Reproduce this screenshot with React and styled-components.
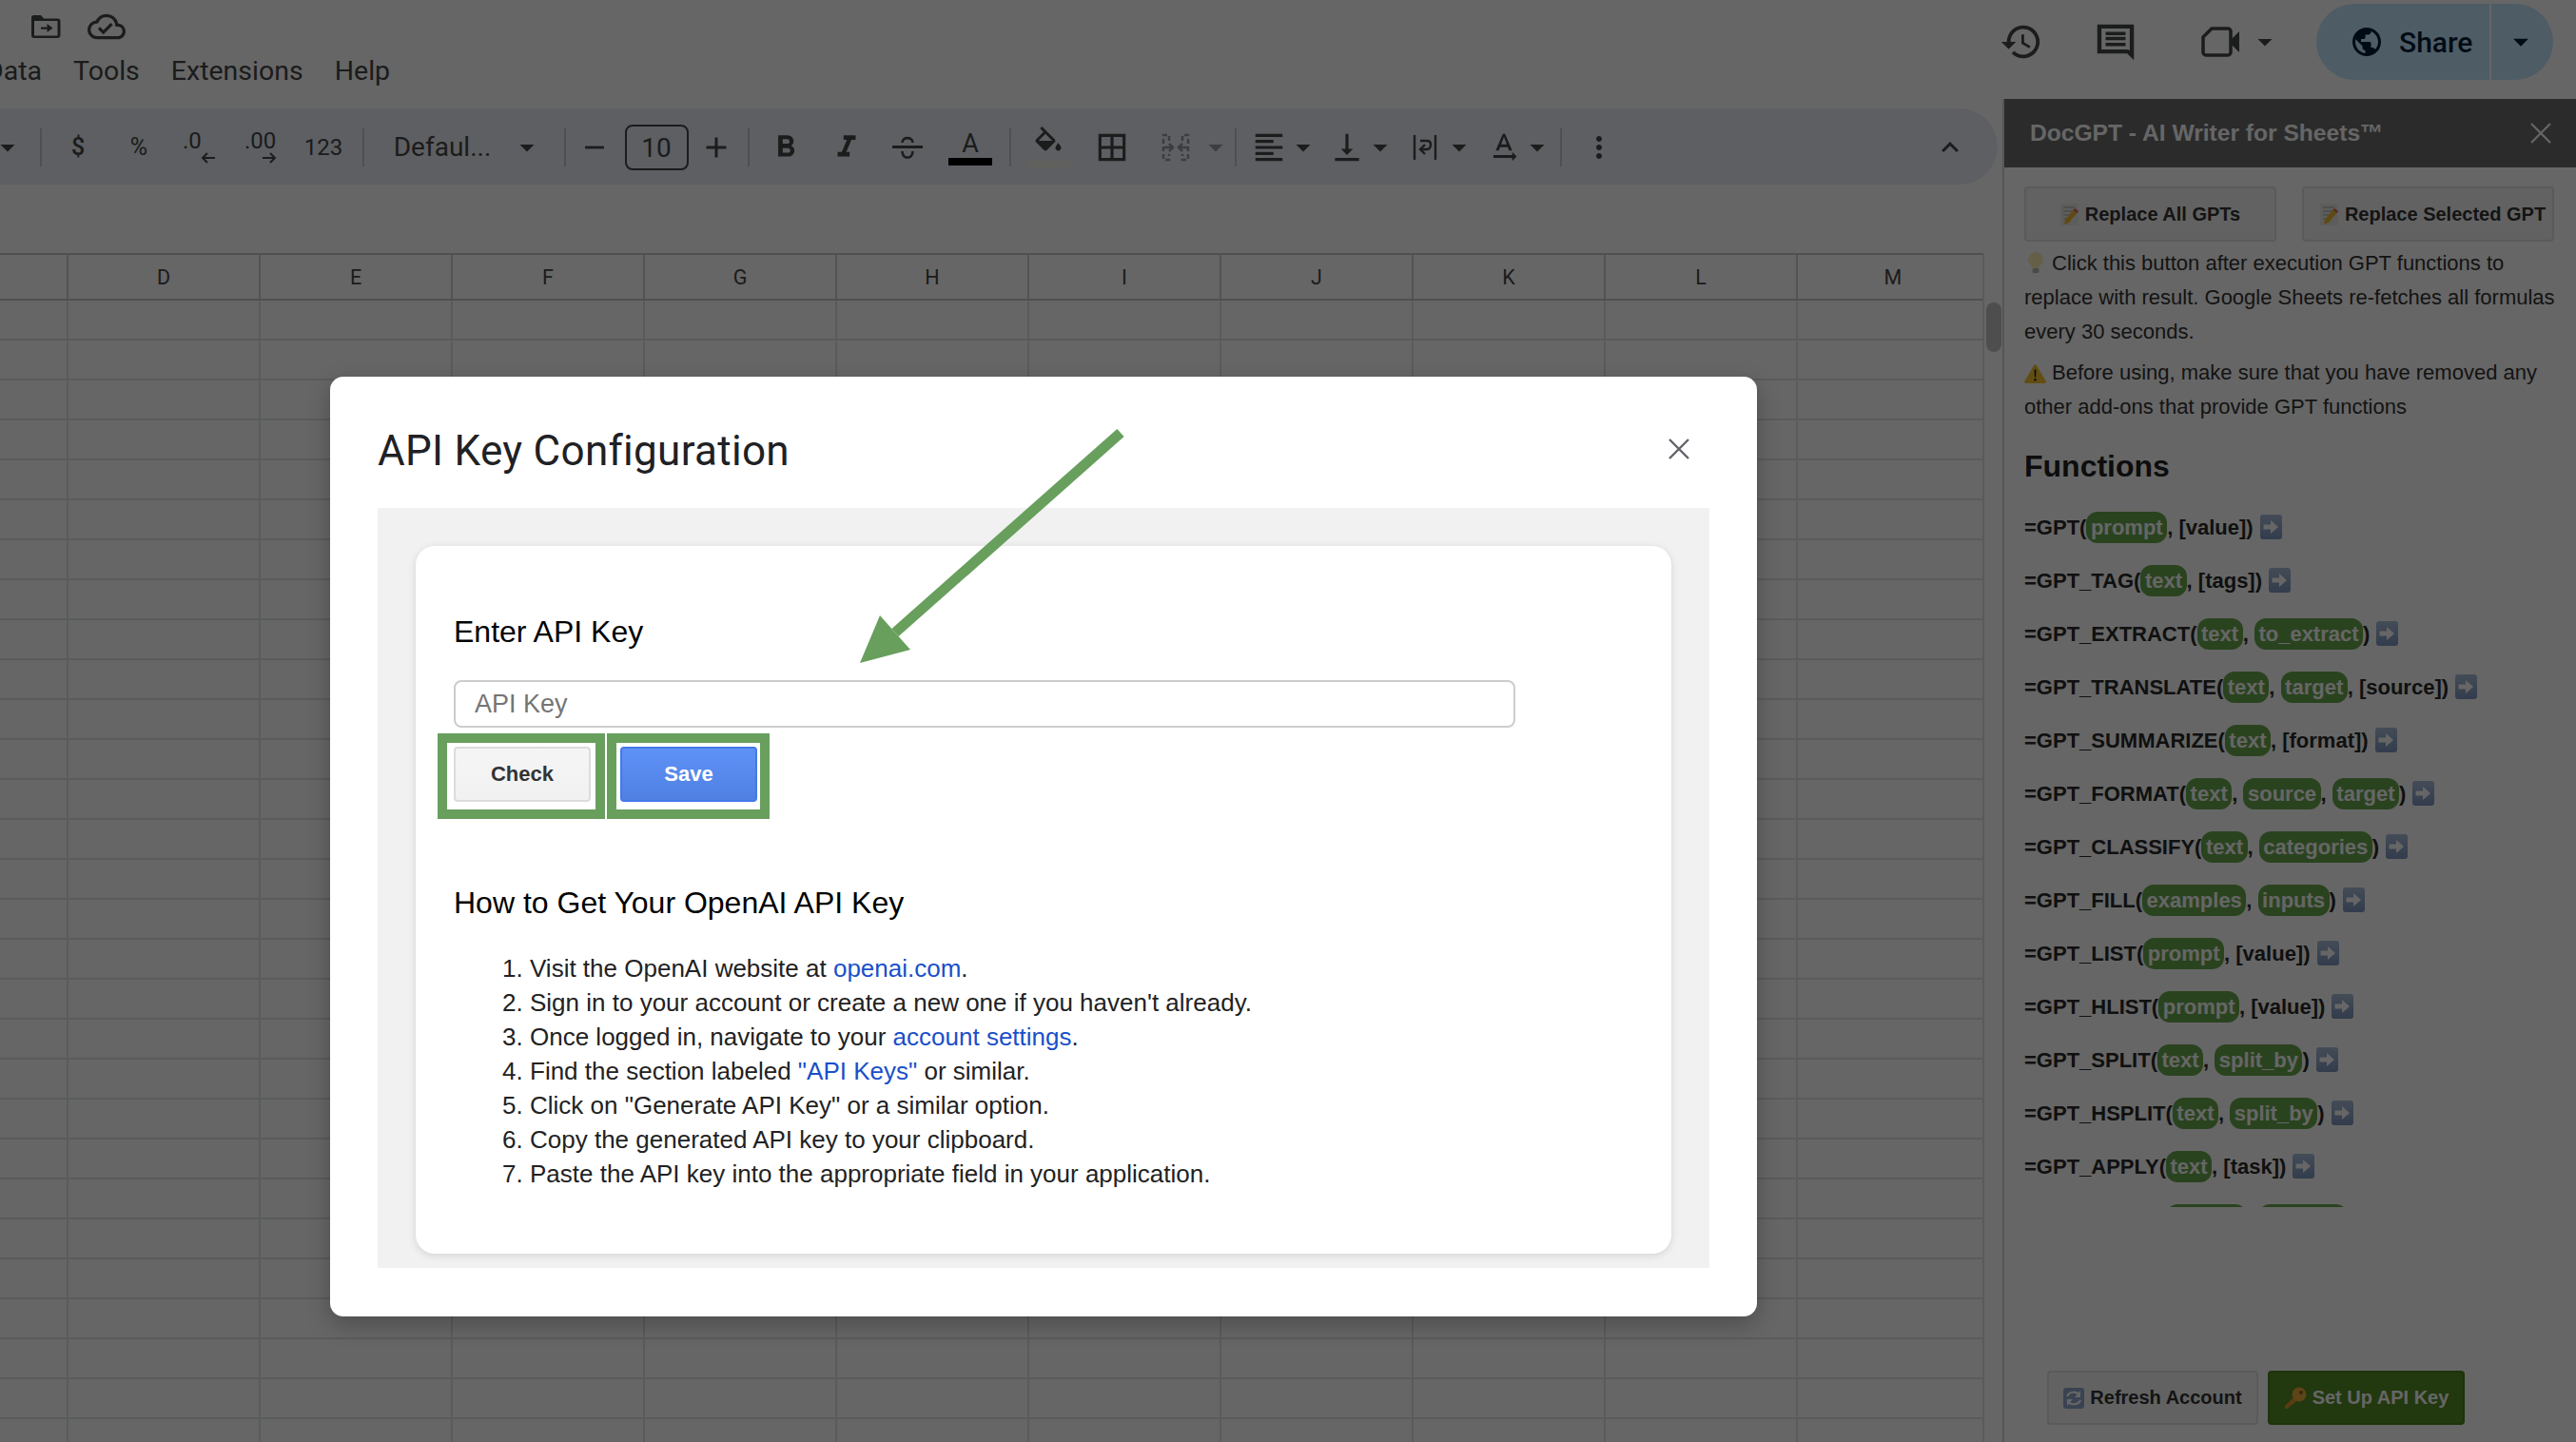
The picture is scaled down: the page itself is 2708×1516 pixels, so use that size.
import React from 'react';
import styled, { createGlobalStyle } from 'styled-components';
import {
  MdFormatBold,
  MdFormatItalic,
  MdBorderAll,
  MdFormatAlignLeft,
  MdVerticalAlignBottom,
  MdTextRotationNone,
  MdMoreVert,
  MdKeyboardArrowUp,
  MdArrowDropDown,
  MdHistory,
  MdPublic,
  MdRemove,
  MdAdd,
  MdOutlineCloudDone,
} from 'react-icons/md';

const GlobalStyle = createGlobalStyle`
  html, body { margin: 0; padding: 0; background: #fff; }
  * { box-sizing: border-box; }
`;

const SHEETS_FONT = 'Roboto, "Liberation Sans", sans-serif';
const ARIAL = '"Liberation Sans", Arial, sans-serif';
const ICON = '#444746';
const GREEN = '#689f5d';

/* ---------- small drawings ---------- */

const FolderMove = () => (
  <svg width="32" height="24" viewBox="0 0 32 24">
    <path d="M1 2.500C1 1.100 2 0 3.500 0H11l3 3.500h15c1.300 0 2.500 1 2.500 2.500V21c0 1.600-1.200 3-2.700 3H3.500C2 24 1 22.800 1 21.500z" fill="#444746" />
    <rect x="4" y="6" width="24.500" height="15.500" fill="#fff" />
    <path d="M11 12.500h6.500V9l6 4.500-6 4.500v-3.300H11z" fill="#444746" />
  </svg>
);

const VideoCam = () => (
  <svg width="42" height="34" viewBox="0 0 42 34">
    <path d="M11 3h17c1.600 0 3 1.300 3 3v22c0 1.600-1.400 3-3 3H5c-1.600 0-3-1.400-3-3V12z" fill="none" stroke="#444746" strokeWidth="3.500" strokeLinejoin="round" />
    <path d="M32 14l8-8v22l-8-8z" fill="#444746" />
  </svg>
);

const CommentIcon = () => (
  <svg width="42" height="42" viewBox="0 0 24 24" fill="#444746">
    <path d="M23 1.500H1V19h18l4 4zM20.500 4v13.200L19.300 16.500H3.500V4zM6 12.500h12v2H6zm0-3.500h12v2H6zm0-3h12v2H6z" />
  </svg>
);

const CloseX = ({ size, color, weight }) => (
  <svg width={size} height={size} viewBox="0 0 22 22" stroke={color} strokeWidth={weight} fill="none">
    <path d="M1 1l20 20M21 1L1 21" />
  </svg>
);

const FillBucket = () => (
  <svg width="36" height="36" viewBox="0 0 24 24" fill="#444746">
    <path d="M16.560 8.940L7.620 0 6.210 1.410l2.380 2.380-5.150 5.150c-.59.59-.59 1.540 0 2.120l5.500 5.500c.29.29.68.44 1.060.44s.77-.15 1.060-.44l5.500-5.500c.59-.58.59-1.530 0-2.120zM5.210 10L10 5.210 14.790 10H5.210zM19 11.500s-2 2.170-2 3.500c0 1.100.9 2 2 2s2-.9 2-2c0-1.330-2-3.500-2-3.500z" />
  </svg>
);

const StrikeIcon = () => (
  <svg width="32" height="26" viewBox="0 0 32 26" fill="none" stroke="#444746" strokeWidth="2.600">
    <path d="M10.500 8c0-6.500 11-6.500 11 0" />
    <path d="M0 12.500h32" strokeWidth="3" />
    <path d="M10.500 17c0 9 11 9 11 0" />
  </svg>
);

const MergeIcon = () => (
  <svg width="30" height="30" viewBox="0 0 30 30" fill="none" stroke="#444746" strokeWidth="2.500" opacity="0.5">
    <path d="M8 8V2H2v26h6v-6M22 8V2h6v26h-6v-6" strokeDasharray="5 3" />
    <path d="M3 15h9M8 11l4 4-4 4M27 15h-9M22 11l-4 4 4 4" />
  </svg>
);

const WrapIcon = () => (
  <svg width="26" height="28" viewBox="0 0 26 28" fill="none" stroke="#444746" strokeWidth="2.400">
    <path d="M2 1v26M24 1v26" />
    <path d="M8 7h7c3 0 4 2 4 4s-1 5-4 5H9" />
    <path d="M13 11l-5 5 5 5" />
  </svg>
);

const DecimalArrow = ({ $left }) => (
  <svg width="15" height="12" viewBox="0 0 15 12" fill="none" stroke="#444746" strokeWidth="2">
    {$left ? <path d="M15 6H2M7 1L2 6l5 5" /> : <path d="M0 6h13M8 1l5 5-5 5" />}
  </svg>
);

const MemoPencil = () => (
  <svg width="20" height="23" viewBox="0 0 20 23">
    <rect x="0" y="0" width="19" height="23" fill="#e8e8e4" />
    <path d="M3 4h12M3 8h10M3 12h8M3 16h6" stroke="#a8a8a8" strokeWidth="1.200" />
    <path d="M15 5l4 3-10 12-5 2 1-5z" fill="#f3b92f" />
    <path d="M15 5l4 3-1.500 2-4-3z" fill="#e0696b" />
  </svg>
);

const Bulb = () => (
  <svg width="16" height="23" viewBox="0 0 16 23">
    <path d="M8 0a8 8 0 0 1 5 14c-1 1-1.500 2-1.500 3h-7c0-1-.5-2-1.500-3A8 8 0 0 1 8 0z" fill="#fbeeb0" />
    <rect x="4.500" y="17" width="7" height="5" rx="1.500" fill="#b9b9b9" />
  </svg>
);

const Warning = () => (
  <svg width="23" height="20" viewBox="0 0 23 20">
    <path d="M10 1.200c.7-1.200 2.300-1.200 3 0l9.600 16.300c.7 1.200-.1 2.500-1.500 2.500H1.900C.5 20-.3 18.700.4 17.500z" fill="#f4c430" />
    <path d="M10.500 5.500h2l-.3 8h-1.400zM10.400 15h2.200v2.400h-2.200z" fill="#222" />
  </svg>
);

const ArrowTile = () => (
  <svg width="23" height="26" viewBox="0 0 23 26">
    <defs>
      <linearGradient id="tile" x1="0" y1="0" x2="0" y2="1">
        <stop offset="0" stopColor="#a9bed9" />
        <stop offset="1" stopColor="#7d97bf" />
      </linearGradient>
    </defs>
    <rect x="0" y="0" width="23" height="26" rx="3" fill="url(#tile)" />
    <path d="M3.500 10.500H11V6l8 7-8 7v-4.500H3.500z" fill="#fff" />
  </svg>
);

const RefreshTile = () => (
  <svg width="22" height="22" viewBox="0 0 22 22">
    <rect width="22" height="22" rx="3" fill="#8fa9cd" />
    <path d="M4 9c2-5 10-6 13-1" stroke="#fff" strokeWidth="2.200" fill="none" />
    <path d="M18 13c-2 5-10 6-13 1" stroke="#fff" strokeWidth="2.200" fill="none" />
    <path d="M18 3v7h-6zM4 19v-7h6z" fill="#fff" />
  </svg>
);

const KeyEmoji = () => (
  <svg width="24" height="24" viewBox="0 0 24 24">
    <path d="M12 9L1 20v3h4v-2h2v-2h2l5-5z" fill="#d99a2b" />
    <circle cx="16" cy="8" r="7.500" fill="#eaaa3a" />
    <circle cx="18" cy="6" r="2" fill="#8a5f14" />
  </svg>
);

/* ---------- page ---------- */

const Page = styled.div`
  position: relative;
  width: 2708px;
  height: 1516px;
  overflow: hidden;
  background: #fff;
`;

const TopBar = styled.div`
  display: flex;
  justify-content: space-between;
  height: 104px;
  font-family: ${SHEETS_FONT};
`;

const TopLeft = styled.div`
  display: flex;
  flex-direction: column;
`;

const DocIcons = styled.div`
  display: flex;
  align-items: center;
  gap: 28px;
  height: 24px;
  margin: 16px 0 0 32px;
`;

const Menu = styled.div`
  display: flex;
  margin: 15px 0 0 -15px;
`;

const MenuItem = styled.span`
  font-size: 28.500px;
  line-height: 40px;
  color: #444746;
  margin-right: 33px;
`;

const TopRight = styled.div`
  display: flex;
  align-items: center;
  height: 88px;
  padding-right: 24px;
`;

const TopIcon = styled.div`
  display: flex;
  align-items: center;
  margin-left: ${(p) => p.$ml}px;
`;

const ShareGroup = styled.div`
  display: flex;
  height: 80px;
  margin-left: 36px;
  color: #001d35;
`;

const ShareMain = styled.div`
  display: flex;
  align-items: center;
  width: 182px;
  padding-left: 35px;
  gap: 16px;
  background: #c2e7ff;
  border-radius: 40px 0 0 40px;
  font-size: 30px;
  font-weight: 500;
`;

const ShareCaret = styled.div`
  display: flex;
  align-items: center;
  justify-content: center;
  width: 65px;
  margin-left: 2px;
  padding-right: 4px;
  background: #c2e7ff;
  border-radius: 0 40px 40px 0;
`;

const Body = styled.div`
  display: flex;
  height: 1412px;
`;

const Main = styled.div`
  width: 2105px;
  flex: none;
  overflow: hidden;
`;

const Toolbar = styled.div`
  display: flex;
  align-items: center;
  width: 2100px;
  height: 80px;
  margin-top: 10px;
  margin-bottom: 72px;
  padding-top: 2px;
  background: #e9eef6;
  border-radius: 0 40px 40px 0;
  font-family: ${SHEETS_FONT};
  color: ${ICON};
`;

const Slot = styled.div`
  display: flex;
  flex: none;
  align-items: center;
  justify-content: center;
  flex-direction: column;
  width: ${(p) => p.$w}px;
  margin-left: ${(p) => p.$ml}px;
  color: ${(p) => (p.$off ? '#9a9c9c' : ICON)};
`;

const Separator = styled.div`
  width: 2px;
  height: 40px;
  background: #c4c7c5;
`;

const ToolText = styled.span`
  font-size: ${(p) => p.$size || 24}px;
  font-weight: ${(p) => p.$weight || 400};
  line-height: 30px;
  white-space: nowrap;
`;

const DecimalText = styled(ToolText)`
  line-height: 20px;
  font-size: 24px;
  align-self: flex-start;
`;

const DecimalRow = styled.div`
  display: flex;
  justify-content: flex-end;
  width: 100%;
  height: 12px;
  margin-top: 2px;
`;

const FontSizeBox = styled.div`
  display: flex;
  align-items: center;
  justify-content: center;
  width: 67px;
  height: 48px;
  border: 2px solid #444746;
  border-radius: 8px;
  font-size: 28px;
`;

const ColorBar = styled.div`
  width: ${(p) => p.$w}px;
  height: 8px;
  background: ${(p) => p.$color};
`;

const GridWrap = styled.div`
  display: flex;
  height: 1250px;
`;

const Grid = styled.div`
  width: 2084px;
  flex: none;
  overflow: hidden;
  font-family: ${SHEETS_FONT};
  color: #444746;
`;

const HeaderRow = styled.div`
  display: flex;
  height: 50px;
  border-top: 2px solid #c7c7c7;
  border-bottom: 2px solid #c7c7c7;
`;

const HeaderCell = styled.div`
  display: flex;
  flex: none;
  align-items: center;
  justify-content: center;
  width: ${(p) => p.$w}px;
  height: 100%;
  border-right: 2px solid #d0d0d0;
  font-size: 21.500px;
`;

const GridRow = styled.div`
  display: flex;
  height: 42px;
  border-bottom: 2px solid #e2e3e3;
`;

const GridCell = styled.div`
  flex: none;
  width: ${(p) => p.$w}px;
  height: 100%;
  border-right: 2px solid #e2e3e3;
`;

const ScrollTrack = styled.div`
  flex: 1;
  padding: 52px 1px 0 2px;
  border-left: 2px solid #e2e3e3;
`;

const ScrollThumb = styled.div`
  height: 52px;
  border-radius: 9px;
  background: #c4c4c4;
`;

/* ---------- side panel ---------- */

const Panel = styled.aside`
  flex: 1;
  border-left: 2px solid #d8d8d8;
  font-family: ${ARIAL};
  color: #333;
`;

const PanelHeader = styled.div`
  display: flex;
  align-items: center;
  justify-content: space-between;
  height: 72px;
  padding: 0 26px 0 27px;
  background: #6b6b6b;
  color: #fff;
  font-size: 24.600px;
  font-weight: 700;
`;

const PanelBody = styled.div`
  padding: 20px 22px 0 21px;
`;

const ButtonPair = styled.div`
  display: flex;
  gap: 27px;
`;

const SideButton = styled.button`
  display: flex;
  align-items: center;
  justify-content: center;
  gap: 6px;
  width: ${(p) => p.$w || 265}px;
  height: ${(p) => p.$h || 58}px;
  padding: 0 0 0 ${(p) => p.$pl || 0}px;
  background: ${(p) => (p.$action ? '#568c26' : '#f6f6f6')};
  border: 2px solid ${(p) => (p.$action ? '#4d8120' : '#e0e0e0')};
  border-radius: 4px;
  font-family: ${ARIAL};
  font-size: 20px;
  font-weight: 700;
  color: ${(p) => (p.$action ? '#fff' : '#333')};
  white-space: nowrap;
`;

const Note = styled.p`
  margin: ${(p) => p.$mt}px 0 0;
  font-size: 22px;
  line-height: 36px;
`;

const NoteIcon = styled.span`
  display: inline-block;
  vertical-align: -4px;
  margin: 0 ${(p) => p.$mr}px 0 ${(p) => p.$ml}px;
  line-height: 0;
`;

const FunctionsTitle = styled.h2`
  margin: 26px 0 0;
  font-size: 32px;
  line-height: 36px;
  font-weight: 700;
  color: #222;
`;

const FunctionList = styled.div`
  height: 731px;
  margin-top: 30px;
  overflow: hidden;
`;

const FunctionRow = styled.div`
  height: 33px;
  margin-bottom: 23px;
  font-size: 22px;
  line-height: 33px;
  font-weight: 700;
  color: #2a2a2a;
  white-space: pre;
`;

const Pill = styled.span`
  display: inline-block;
  padding: 0 4.500px;
  border-radius: 12px;
  background: #6aa84f;
  color: #fff;
`;

const RowArrow = styled.span`
  display: inline-block;
  margin-left: 7px;
  line-height: 0;
  vertical-align: -5px;
`;

const FooterButtons = styled.div`
  display: flex;
  gap: 10px;
  margin: 172px 0 0 24px;
`;

/* ---------- dialog ---------- */

const Dim = styled.div`
  position: absolute;
  inset: 0;
  padding: 396px 0 0 347px;
  background: rgba(0, 0, 0, 0.6);
`;

const Dialog = styled.div`
  position: relative;
  width: 1500px;
  height: 988px;
  padding: 0 50px;
  background: #fff;
  border-radius: 14px;
  box-shadow: 0 8px 24px rgba(0, 0, 0, 0.25);
`;

const DialogHead = styled.div`
  display: flex;
  align-items: center;
  justify-content: space-between;
  height: 138px;
  padding: 17px 21px 0 0;
`;

const DialogTitle = styled.h1`
  margin: 0;
  font-family: ${SHEETS_FONT};
  font-size: 44px;
  font-weight: 400;
  letter-spacing: 0.3px;
  color: #202124;
`;

const DialogClose = styled.div`
  display: flex;
  margin-bottom: 3px;
`;

const GreyArea = styled.div`
  height: 799px;
  padding: 40px 40px 15px 40px;
  background: #f1f1f1;
`;

const Card = styled.div`
  height: 744px;
  padding: 72px 40px 0;
  background: #fff;
  border-radius: 20px;
  box-shadow: 0 2px 8px rgba(0, 0, 0, 0.12);
  font-family: ${ARIAL};
`;

const CardTitle = styled.h3`
  margin: ${(p) => p.$mt || 0}px 0 0;
  font-size: 32px;
  line-height: 36px;
  font-weight: 400;
  color: #000;
`;

const KeyInput = styled.input`
  display: block;
  width: 1116px;
  height: 50px;
  margin-top: 33px;
  padding: 0 20px;
  border: 2px solid #ccc;
  border-radius: 8px;
  font-family: ${ARIAL};
  font-size: 27px;
  &::placeholder {
    color: #757575;
  }
`;

const ActionRow = styled.div`
  display: flex;
  gap: 31px;
  margin-top: 20px;
`;

const Marked = styled.div`
  position: relative;
`;

const Frame = styled.div`
  position: absolute;
  top: -14px;
  bottom: -18px;
  left: -${(p) => p.$l}px;
  right: -${(p) => p.$r}px;
  border: 10px solid ${GREEN};
`;

const ActionButton = styled.button`
  display: block;
  width: 144px;
  height: 58px;
  border-radius: 4px;
  border: 2px solid ${(p) => (p.$primary ? '#4479ea' : '#dcdcdc')};
  background: ${(p) => (p.$primary ? 'linear-gradient(#5f92f7, #4f80e2)' : 'linear-gradient(#f5f5f5, #f1f1f1)')};
  color: ${(p) => (p.$primary ? '#fff' : '#333')};
  font-family: ${ARIAL};
  font-size: 22px;
  font-weight: 700;
`;

const Steps = styled.ol`
  margin: 33px 0 0;
  padding: 0 0 0 80px;
  font-size: 26px;
  line-height: 36px;
  color: #222;
`;

const StepLink = styled.a`
  color: #1a4fc9;
  text-decoration: none;
`;

const Annotation = styled.svg`
  position: absolute;
  left: 540px;
  top: 40px;
`;

/* ---------- data ---------- */

const P = ({ children }) => <Pill>{children}</Pill>;

const functions = [
  <>=GPT(<P>prompt</P>, [value])</>,
  <>=GPT_TAG(<P>text</P>, [tags])</>,
  <>=GPT_EXTRACT(<P>text</P>, <P>to_extract</P>)</>,
  <>=GPT_TRANSLATE(<P>text</P>, <P>target</P>, [source])</>,
  <>=GPT_SUMMARIZE(<P>text</P>, [format])</>,
  <>=GPT_FORMAT(<P>text</P>, <P>source</P>, <P>target</P>)</>,
  <>=GPT_CLASSIFY(<P>text</P>, <P>categories</P>)</>,
  <>=GPT_FILL(<P>examples</P>, <P>inputs</P>)</>,
  <>=GPT_LIST(<P>prompt</P>, [value])</>,
  <>=GPT_HLIST(<P>prompt</P>, [value])</>,
  <>=GPT_SPLIT(<P>text</P>, <P>split_by</P>)</>,
  <>=GPT_HSPLIT(<P>text</P>, <P>split_by</P>)</>,
  <>=GPT_APPLY(<P>text</P>, [task])</>,
  <>=GPT_TABLE(<P>prompt</P>, <P>headers</P>)</>,
];

const columns = ['', 'D', 'E', 'F', 'G', 'H', 'I', 'J', 'K', 'L', 'M'];
const columnWidth = (i) => (i === 0 ? 72 : 202);
const rows = Array.from({ length: 30 }, (_, i) => i);

const Caret = () => <MdArrowDropDown size={36} />;
const Sep = () => <Separator />;

// center x and width of everything on the toolbar, left to right
const tools = [
  [8, 16, <Caret />],
  [43, 2, <Sep />],
  [82, 30, <ToolText $size={25} $weight={500}>$</ToolText>],
  [146, 30, <ToolText $size={25}>%</ToolText>],
  [209, 34, <><DecimalText>.0</DecimalText><DecimalRow><DecimalArrow $left /></DecimalRow></>],
  [274, 34, <><DecimalText>.00</DecimalText><DecimalRow><DecimalArrow /></DecimalRow></>],
  [340, 40, <ToolText $size={24}>123</ToolText>],
  [382, 2, <Sep />],
  [465, 106, <ToolText $size={28}>Defaul...</ToolText>],
  [554, 24, <Caret />],
  [594, 2, <Sep />],
  [625, 36, <MdRemove size={34} />],
  [690, 67, <FontSizeBox>10</FontSizeBox>],
  [753, 36, <MdAdd size={36} />],
  [787, 2, <Sep />],
  [826, 36, <MdFormatBold size={38} />],
  [890, 36, <MdFormatItalic size={38} />],
  [954, 36, <StrikeIcon />],
  [1020, 46, <><ToolText $size={27}>A</ToolText><ColorBar $w={46} $color="#000" /></>],
  [1062, 2, <Sep />],
  [1102, 46, <><FillBucket /><ColorBar $w={46} $color="#f0f0e6" /></>],
  [1169, 36, <MdBorderAll size={38} />],
  [1236, 36, <MergeIcon />],
  [1278, 24, <Slot $off $w={24} $ml={0}><Caret /></Slot>],
  [1299, 2, <Sep />],
  [1334, 36, <MdFormatAlignLeft size={38} />],
  [1370, 20, <Caret />],
  [1416, 36, <MdVerticalAlignBottom size={38} />],
  [1451, 20, <Caret />],
  [1498, 28, <WrapIcon />],
  [1534, 20, <Caret />],
  [1581, 36, <MdTextRotationNone size={38} />],
  [1616, 20, <Caret />],
  [1641, 2, <Sep />],
  [1681, 36, <MdMoreVert size={36} />],
  [2050, 36, <MdKeyboardArrowUp size={36} />],
];

const placedTools = tools.reduce((list, [center, width, node]) => {
  const left = center - width / 2;
  const prevRight = list.length ? list[list.length - 1].right : 0;
  list.push({ width, node, ml: left - prevRight, right: left + width });
  return list;
}, []);

const App = () => {
  return (
    <Page>
      <GlobalStyle />
      <TopBar>
        <TopLeft>
          <DocIcons>
            <FolderMove />
            <MdOutlineCloudDone size={40} color={ICON} />
          </DocIcons>
          <Menu>
            <MenuItem>Data</MenuItem>
            <MenuItem>Tools</MenuItem>
            <MenuItem>Extensions</MenuItem>
            <MenuItem>Help</MenuItem>
          </Menu>
        </TopLeft>
        <TopRight>
          <TopIcon $ml={0}><MdHistory size={46} color={ICON} /></TopIcon>
          <TopIcon $ml={55}><CommentIcon /></TopIcon>
          <TopIcon $ml={69}><VideoCam /></TopIcon>
          <TopIcon $ml={7}><MdArrowDropDown size={36} color={ICON} /></TopIcon>
          <ShareGroup>
            <ShareMain>
              <MdPublic size={36} />
              Share
            </ShareMain>
            <ShareCaret><MdArrowDropDown size={38} /></ShareCaret>
          </ShareGroup>
        </TopRight>
      </TopBar>

      <Body>
        <Main>
          <Toolbar>
            {placedTools.map((tool, i) => (
              <Slot key={i} $w={tool.width} $ml={tool.ml}>{tool.node}</Slot>
            ))}
          </Toolbar>
          <GridWrap>
            <Grid>
              <HeaderRow>
                {columns.map((col, i) => (
                  <HeaderCell key={i} $w={columnWidth(i)}>{col}</HeaderCell>
                ))}
              </HeaderRow>
              {rows.map((r) => (
                <GridRow key={r}>
                  {columns.map((col, i) => (
                    <GridCell key={i} $w={columnWidth(i)} />
                  ))}
                </GridRow>
              ))}
            </Grid>
            <ScrollTrack><ScrollThumb /></ScrollTrack>
          </GridWrap>
        </Main>

        <Panel>
          <PanelHeader>
            DocGPT - AI Writer for Sheets™
            <CloseX size={22} color="#fff" weight={2.2} />
          </PanelHeader>
          <PanelBody>
            <ButtonPair>
              <SideButton><MemoPencil /> Replace All GPTs</SideButton>
              <SideButton $pl={10}><MemoPencil /> Replace Selected GPT</SideButton>
            </ButtonPair>
            <Note $mt={5}>
              <NoteIcon $ml={4} $mr={9}><Bulb /></NoteIcon>
              Click this button after execution GPT functions to replace with result. Google Sheets re-fetches all formulas every 30 seconds.
            </Note>
            <Note $mt={7}>
              <NoteIcon $ml={0} $mr={6}><Warning /></NoteIcon>
              Before using, make sure that you have removed any other add-ons that provide GPT functions
            </Note>
            <FunctionsTitle>Functions</FunctionsTitle>
            <FunctionList>
              {functions.map((fn, i) => (
                <FunctionRow key={i}>
                  {fn}
                  <RowArrow><ArrowTile /></RowArrow>
                </FunctionRow>
              ))}
            </FunctionList>
            <FooterButtons>
              <SideButton $w={222} $h={57}><RefreshTile /> Refresh Account</SideButton>
              <SideButton $w={207} $h={57} $action><KeyEmoji /> Set Up API Key</SideButton>
            </FooterButtons>
          </PanelBody>
        </Panel>
      </Body>

      <Dim>
        <Dialog>
          <DialogHead>
            <DialogTitle>API Key Configuration</DialogTitle>
            <DialogClose><CloseX size={22} color="#5f6368" weight={2.4} /></DialogClose>
          </DialogHead>
          <GreyArea>
            <Card>
              <CardTitle>Enter API Key</CardTitle>
              <KeyInput placeholder="API Key" readOnly />
              <ActionRow>
                <Marked>
                  <ActionButton>Check</ActionButton>
                  <Frame $l={17} $r={15} />
                </Marked>
                <Marked>
                  <ActionButton $primary>Save</ActionButton>
                  <Frame $l={14} $r={13} />
                </Marked>
              </ActionRow>
              <CardTitle $mt={88}>How to Get Your OpenAI API Key</CardTitle>
              <Steps>
                <li>Visit the OpenAI website at <StepLink href="#">openai.com</StepLink>.</li>
                <li>Sign in to your account or create a new one if you haven't already.</li>
                <li>Once logged in, navigate to your <StepLink href="#">account settings</StepLink>.</li>
                <li>Find the section labeled <StepLink href="#">"API Keys"</StepLink> or similar.</li>
                <li>Click on "Generate API Key" or a similar option.</li>
                <li>Copy the generated API key to your clipboard.</li>
                <li>Paste the API key into the appropriate field in your application.</li>
              </Steps>
            </Card>
          </GreyArea>
          <Annotation width="310" height="280" viewBox="0 0 310 280">
            <path d="M291 19L54 229" stroke={GREEN} strokeWidth="11" />
            <path d="M17 261L38 211L70 247z" fill={GREEN} />
          </Annotation>
        </Dialog>
      </Dim>
    </Page>
  );
};

export default App;
